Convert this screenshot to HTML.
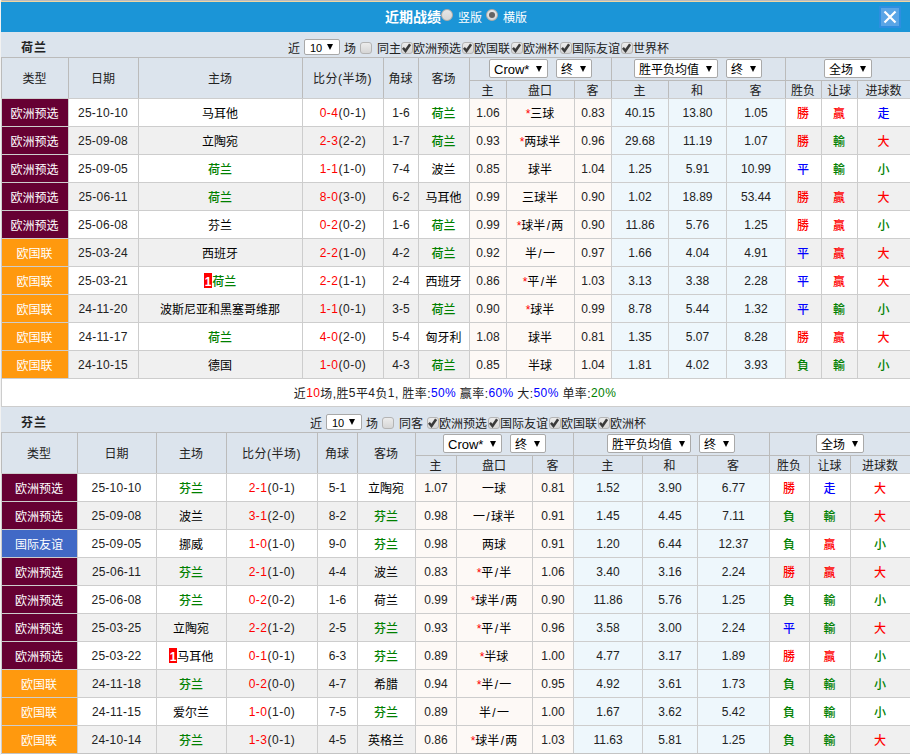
<!DOCTYPE html><html lang="zh-CN"><head><meta charset="utf-8"><title>近期战绩</title><style>
*{box-sizing:border-box;margin:0;padding:0}
html,body{width:910px;height:755px;overflow:hidden;background:#fff}
body{font-family:"Liberation Sans","Noto Sans CJK SC",sans-serif;font-size:12px;color:#222;position:relative}
#wrap{position:absolute;left:0;top:0;width:910px;height:755px;overflow:hidden;background:#fff}
#edge{position:absolute;left:0;top:0;width:1px;height:755px;background:#f2f2f2;z-index:5}
#l0{position:absolute;left:2px;top:0;width:908px;height:1px;background:#b9bbc1}
#l1{position:absolute;left:1px;top:0;width:909px;height:2px;background:#f0d6a2}
#bar{position:absolute;left:1px;top:2px;width:909px;height:30px;background:#1b95d7;color:#fff}
#title{position:absolute;left:385px;top:5px;font-size:14px;font-weight:bold;line-height:20px;white-space:nowrap;letter-spacing:0}
.rtxt{position:absolute;top:7px;line-height:18px;white-space:nowrap;font-size:12px}
.radio{position:absolute;width:12px;height:12px;border-radius:50%;border:1px solid #b3ada6;background:linear-gradient(#e6e6e6,#d6d6d6);top:7px}
.radio.on:after{content:"";position:absolute;left:2px;top:2px;width:6px;height:6px;border-radius:50%;background:#636363}
#close{position:absolute;left:879px;top:6px;width:22px;height:22px;background:#5aa5e6;border:2px solid #2d8fe0}
#close svg{position:absolute;left:0;top:0}
.sec{position:absolute;left:1px;width:909px;height:26px;background:#dce4ed}
.sec b{position:absolute;left:20px;top:8px;line-height:16px;font-size:12px;color:#222;letter-spacing:1px}
.tb{position:absolute;top:0;height:26px;white-space:nowrap}
.tb span,.tb i{position:absolute}
.tb .t{top:10px;line-height:14px}
.cb{width:12px;height:12px;top:10px;border:1px solid #b4b4b4;border-radius:3px;background:linear-gradient(#ececec,#d6d6d6)}
.cb svg{position:absolute;left:0;top:0}
.sel{position:absolute;background:#fff;border:1px solid #a9a9a9;border-radius:2px;height:19px;line-height:17px;padding-top:2px;overflow:hidden;padding-left:4px;font-size:12px;color:#000;white-space:nowrap;text-align:left}
.sel i{position:absolute;right:5.5px;top:6px;width:0;height:0;border-left:3.5px solid transparent;border-right:3.5px solid transparent;border-top:6px solid #000}
.sel.s{height:16px;line-height:14px;padding-top:1px;font-size:11px;padding-left:5px}
.sel.s i{top:4px;right:6px;border-top-width:6px;border-left-width:3.5px;border-right-width:3.5px}
.lat{font-size:13px;position:relative;top:-1px}
.grid{position:absolute;left:0;width:911px}
.c{position:absolute;text-align:center;border-left:1px solid #cdcdcd;border-top:1px solid #cdcdcd;white-space:nowrap;overflow:hidden;line-height:27px;height:28px}
.h{background:#dce4ed;border-color:#bbb;color:#222;padding-right:1px}
.h1{height:41px;line-height:40px;padding-top:1px}
.h2{height:23px}
.h3{height:18px;line-height:17px;padding-top:2px}
.d{letter-spacing:.25px;padding-right:1px}.sc{letter-spacing:.5px}.z{padding-top:2px;padding-right:1px}.n{padding-top:1px}
.w{background:#fff}.g{background:#f0f0f0}
.oa{background:#fdf9f6}.ob{background:#eef7fc}
.t1{background:#660033;color:#fff}.t2{background:#ff990e;color:#fff}.t3{background:#4169c6;color:#fff}
.gr{color:#008000;font-weight:500}.rd{color:#f00;font-weight:500}.bl{color:#00f;font-weight:500}
.k{color:#000}
.sl{padding:0 1.3px}
.rc{background:#f00;color:#fff;font-weight:bold;display:inline-block;line-height:18px;height:15px;overflow:hidden;padding:0 1px;vertical-align:middle;position:relative;top:-2px}
.sum{position:absolute;left:1px;width:910px;height:29px;border:1px solid #cdcdcd;border-top:1px solid #cdcdcd;background:#fff;text-align:center;line-height:27px;color:#222;padding-top:2px;padding-right:2px;letter-spacing:0.4px}
.sum span{position:relative;top:-1px}
.bot{position:absolute;left:1px;width:910px;height:1px;background:#c4c4c4}
</style></head><body><div id="wrap">
<div id="l1"></div><div id="l0"></div>
<div id="bar"><span id="title" style="left:384px">近期战绩</span><span class="radio" style="left:440px"></span><span class="rtxt" style="left:457px">竖版</span><span class="radio on" style="left:485px"></span><span class="rtxt" style="left:502px">横版</span><div id="close" style="left:878px;top:4px"><svg width="18" height="18" viewBox="0 0 18 18"><path d="M3.5 3.5 L14.5 14.5 M14.5 3.5 L3.5 14.5" stroke="#fff" stroke-width="2.2" fill="none"/></svg></div></div>
<div class="sec" style="top:32px"><b>荷兰</b><div class="tb" style="left:-1px"><span class="t" style="left:288px">近</span><span class="sel s" style="left:304px;top:7px;width:36px">10<i></i></span><span class="t" style="left:344px">场</span><span class="cb" style="left:360px"></span><span class="t" style="left:377px">同主</span><span class="cb" style="left:401px"><svg width="10" height="10" viewBox="0 0 10 10"><path d="M0.9 4.9 L3.5 7.9 L8.1 1.3" fill="none" stroke="#3a3a3a" stroke-width="2.6"/></svg></span><span class="t" style="left:413px">欧洲预选</span><span class="cb" style="left:462px"><svg width="10" height="10" viewBox="0 0 10 10"><path d="M0.9 4.9 L3.5 7.9 L8.1 1.3" fill="none" stroke="#3a3a3a" stroke-width="2.6"/></svg></span><span class="t" style="left:474px">欧国联</span><span class="cb" style="left:511px"><svg width="10" height="10" viewBox="0 0 10 10"><path d="M0.9 4.9 L3.5 7.9 L8.1 1.3" fill="none" stroke="#3a3a3a" stroke-width="2.6"/></svg></span><span class="t" style="left:523px">欧洲杯</span><span class="cb" style="left:560px"><svg width="10" height="10" viewBox="0 0 10 10"><path d="M0.9 4.9 L3.5 7.9 L8.1 1.3" fill="none" stroke="#3a3a3a" stroke-width="2.6"/></svg></span><span class="t" style="left:572px">国际友谊</span><span class="cb" style="left:621px"><svg width="10" height="10" viewBox="0 0 10 10"><path d="M0.9 4.9 L3.5 7.9 L8.1 1.3" fill="none" stroke="#3a3a3a" stroke-width="2.6"/></svg></span><span class="t" style="left:633px">世界杯</span></div></div>
<div class="grid" style="top:0"><div class="c h h1" style="left:1px;top:57px;width:67px">类型</div>
<div class="c h h1" style="left:68px;top:57px;width:70px">日期</div>
<div class="c h h1" style="left:138px;top:57px;width:164px">主场</div>
<div class="c h h1 sc" style="left:302px;top:57px;width:81px">比分(半场)</div>
<div class="c h h1" style="left:383px;top:57px;width:35px">角球</div>
<div class="c h h1" style="left:418px;top:57px;width:51px">客场</div>
<div class="c h h2" style="left:469px;top:57px;width:142px"></div>
<div class="c h h2" style="left:611px;top:57px;width:174px"></div>
<div class="c h h2" style="left:785px;top:57px;width:125px"></div>
<div class="c h h3" style="left:469px;top:80px;width:37px">主</div>
<div class="c h h3" style="left:506px;top:80px;width:68px">盘口</div>
<div class="c h h3" style="left:574px;top:80px;width:37px">客</div>
<div class="c h h3" style="left:611px;top:80px;width:57px">主</div>
<div class="c h h3" style="left:668px;top:80px;width:58px">和</div>
<div class="c h h3" style="left:726px;top:80px;width:59px">客</div>
<div class="c h h3" style="left:785px;top:80px;width:36px">胜负</div>
<div class="c h h3" style="left:821px;top:80px;width:36px">让球</div>
<div class="c h h3" style="left:857px;top:80px;width:53px">进球数</div>
<span class="sel" style="left:489px;top:59px;width:59px"><span class="lat">Crow*</span><i></i></span>
<span class="sel" style="left:556px;top:59px;width:36px">终<i></i></span>
<span class="sel" style="left:634px;top:59px;width:84px">胜平负均值<i></i></span>
<span class="sel" style="left:726px;top:59px;width:36px">终<i></i></span>
<span class="sel" style="left:824px;top:59px;width:48px">全场<i></i></span>
<div class="c t1 z" style="left:1px;top:98px;width:67px">欧洲预选</div>
<div class="c w n d" style="left:68px;top:98px;width:70px">25-10-10</div>
<div class="c w z" style="left:138px;top:98px;width:164px"><span class="k">马耳他</span></div>
<div class="c w n sc" style="left:302px;top:98px;width:81px"><span class="rd">0-4</span>(0-1)</div>
<div class="c w n" style="left:383px;top:98px;width:35px">1-6</div>
<div class="c w z" style="left:418px;top:98px;width:51px"><span class="gr">荷兰</span></div>
<div class="c oa n" style="left:469px;top:98px;width:37px">1.06</div>
<div class="c oa k z" style="left:506px;top:98px;width:68px"><span class="rd">*</span>三球</div>
<div class="c oa n" style="left:574px;top:98px;width:37px">0.83</div>
<div class="c ob n" style="left:611px;top:98px;width:57px">40.15</div>
<div class="c ob n" style="left:668px;top:98px;width:58px">13.80</div>
<div class="c ob n" style="left:726px;top:98px;width:59px">1.05</div>
<div class="c w z rd" style="left:785px;top:98px;width:36px">勝</div>
<div class="c w z rd" style="left:821px;top:98px;width:36px">贏</div>
<div class="c w z bl" style="left:857px;top:98px;width:53px">走</div>
<div class="c t1 z" style="left:1px;top:126px;width:67px">欧洲预选</div>
<div class="c g n d" style="left:68px;top:126px;width:70px">25-09-08</div>
<div class="c g z" style="left:138px;top:126px;width:164px"><span class="k">立陶宛</span></div>
<div class="c g n sc" style="left:302px;top:126px;width:81px"><span class="rd">2-3</span>(2-2)</div>
<div class="c g n" style="left:383px;top:126px;width:35px">1-7</div>
<div class="c g z" style="left:418px;top:126px;width:51px"><span class="gr">荷兰</span></div>
<div class="c oa n" style="left:469px;top:126px;width:37px">0.93</div>
<div class="c oa k z" style="left:506px;top:126px;width:68px"><span class="rd">*</span>两球半</div>
<div class="c oa n" style="left:574px;top:126px;width:37px">0.96</div>
<div class="c ob n" style="left:611px;top:126px;width:57px">29.68</div>
<div class="c ob n" style="left:668px;top:126px;width:58px">11.19</div>
<div class="c ob n" style="left:726px;top:126px;width:59px">1.07</div>
<div class="c g z rd" style="left:785px;top:126px;width:36px">勝</div>
<div class="c g z gr" style="left:821px;top:126px;width:36px">輸</div>
<div class="c g z rd" style="left:857px;top:126px;width:53px">大</div>
<div class="c t1 z" style="left:1px;top:154px;width:67px">欧洲预选</div>
<div class="c w n d" style="left:68px;top:154px;width:70px">25-09-05</div>
<div class="c w z" style="left:138px;top:154px;width:164px"><span class="gr">荷兰</span></div>
<div class="c w n sc" style="left:302px;top:154px;width:81px"><span class="rd">1-1</span>(1-0)</div>
<div class="c w n" style="left:383px;top:154px;width:35px">7-4</div>
<div class="c w z" style="left:418px;top:154px;width:51px"><span class="k">波兰</span></div>
<div class="c oa n" style="left:469px;top:154px;width:37px">0.85</div>
<div class="c oa k z" style="left:506px;top:154px;width:68px">球半</div>
<div class="c oa n" style="left:574px;top:154px;width:37px">1.04</div>
<div class="c ob n" style="left:611px;top:154px;width:57px">1.25</div>
<div class="c ob n" style="left:668px;top:154px;width:58px">5.91</div>
<div class="c ob n" style="left:726px;top:154px;width:59px">10.99</div>
<div class="c w z bl" style="left:785px;top:154px;width:36px">平</div>
<div class="c w z gr" style="left:821px;top:154px;width:36px">輸</div>
<div class="c w z gr" style="left:857px;top:154px;width:53px">小</div>
<div class="c t1 z" style="left:1px;top:182px;width:67px">欧洲预选</div>
<div class="c g n d" style="left:68px;top:182px;width:70px">25-06-11</div>
<div class="c g z" style="left:138px;top:182px;width:164px"><span class="gr">荷兰</span></div>
<div class="c g n sc" style="left:302px;top:182px;width:81px"><span class="rd">8-0</span>(3-0)</div>
<div class="c g n" style="left:383px;top:182px;width:35px">6-2</div>
<div class="c g z" style="left:418px;top:182px;width:51px"><span class="k">马耳他</span></div>
<div class="c oa n" style="left:469px;top:182px;width:37px">0.99</div>
<div class="c oa k z" style="left:506px;top:182px;width:68px">三球半</div>
<div class="c oa n" style="left:574px;top:182px;width:37px">0.90</div>
<div class="c ob n" style="left:611px;top:182px;width:57px">1.02</div>
<div class="c ob n" style="left:668px;top:182px;width:58px">18.89</div>
<div class="c ob n" style="left:726px;top:182px;width:59px">53.44</div>
<div class="c g z rd" style="left:785px;top:182px;width:36px">勝</div>
<div class="c g z rd" style="left:821px;top:182px;width:36px">贏</div>
<div class="c g z rd" style="left:857px;top:182px;width:53px">大</div>
<div class="c t1 z" style="left:1px;top:210px;width:67px">欧洲预选</div>
<div class="c w n d" style="left:68px;top:210px;width:70px">25-06-08</div>
<div class="c w z" style="left:138px;top:210px;width:164px"><span class="k">芬兰</span></div>
<div class="c w n sc" style="left:302px;top:210px;width:81px"><span class="rd">0-2</span>(0-2)</div>
<div class="c w n" style="left:383px;top:210px;width:35px">1-6</div>
<div class="c w z" style="left:418px;top:210px;width:51px"><span class="gr">荷兰</span></div>
<div class="c oa n" style="left:469px;top:210px;width:37px">0.99</div>
<div class="c oa k z" style="left:506px;top:210px;width:68px"><span class="rd">*</span>球半<span class="sl">/</span>两</div>
<div class="c oa n" style="left:574px;top:210px;width:37px">0.90</div>
<div class="c ob n" style="left:611px;top:210px;width:57px">11.86</div>
<div class="c ob n" style="left:668px;top:210px;width:58px">5.76</div>
<div class="c ob n" style="left:726px;top:210px;width:59px">1.25</div>
<div class="c w z rd" style="left:785px;top:210px;width:36px">勝</div>
<div class="c w z rd" style="left:821px;top:210px;width:36px">贏</div>
<div class="c w z gr" style="left:857px;top:210px;width:53px">小</div>
<div class="c t2 z" style="left:1px;top:238px;width:67px">欧国联</div>
<div class="c g n d" style="left:68px;top:238px;width:70px">25-03-24</div>
<div class="c g z" style="left:138px;top:238px;width:164px"><span class="k">西班牙</span></div>
<div class="c g n sc" style="left:302px;top:238px;width:81px"><span class="rd">2-2</span>(1-0)</div>
<div class="c g n" style="left:383px;top:238px;width:35px">4-2</div>
<div class="c g z" style="left:418px;top:238px;width:51px"><span class="gr">荷兰</span></div>
<div class="c oa n" style="left:469px;top:238px;width:37px">0.92</div>
<div class="c oa k z" style="left:506px;top:238px;width:68px">半<span class="sl">/</span>一</div>
<div class="c oa n" style="left:574px;top:238px;width:37px">0.97</div>
<div class="c ob n" style="left:611px;top:238px;width:57px">1.66</div>
<div class="c ob n" style="left:668px;top:238px;width:58px">4.04</div>
<div class="c ob n" style="left:726px;top:238px;width:59px">4.91</div>
<div class="c g z bl" style="left:785px;top:238px;width:36px">平</div>
<div class="c g z rd" style="left:821px;top:238px;width:36px">贏</div>
<div class="c g z rd" style="left:857px;top:238px;width:53px">大</div>
<div class="c t2 z" style="left:1px;top:266px;width:67px">欧国联</div>
<div class="c w n d" style="left:68px;top:266px;width:70px">25-03-21</div>
<div class="c w z" style="left:138px;top:266px;width:164px"><span class="rc">1</span><span class="gr">荷兰</span></div>
<div class="c w n sc" style="left:302px;top:266px;width:81px"><span class="rd">2-2</span>(1-1)</div>
<div class="c w n" style="left:383px;top:266px;width:35px">2-4</div>
<div class="c w z" style="left:418px;top:266px;width:51px"><span class="k">西班牙</span></div>
<div class="c oa n" style="left:469px;top:266px;width:37px">0.86</div>
<div class="c oa k z" style="left:506px;top:266px;width:68px"><span class="rd">*</span>平<span class="sl">/</span>半</div>
<div class="c oa n" style="left:574px;top:266px;width:37px">1.03</div>
<div class="c ob n" style="left:611px;top:266px;width:57px">3.13</div>
<div class="c ob n" style="left:668px;top:266px;width:58px">3.38</div>
<div class="c ob n" style="left:726px;top:266px;width:59px">2.28</div>
<div class="c w z bl" style="left:785px;top:266px;width:36px">平</div>
<div class="c w z rd" style="left:821px;top:266px;width:36px">贏</div>
<div class="c w z rd" style="left:857px;top:266px;width:53px">大</div>
<div class="c t2 z" style="left:1px;top:294px;width:67px">欧国联</div>
<div class="c g n d" style="left:68px;top:294px;width:70px">24-11-20</div>
<div class="c g z" style="left:138px;top:294px;width:164px"><span class="k">波斯尼亚和黑塞哥维那</span></div>
<div class="c g n sc" style="left:302px;top:294px;width:81px"><span class="rd">1-1</span>(0-1)</div>
<div class="c g n" style="left:383px;top:294px;width:35px">3-5</div>
<div class="c g z" style="left:418px;top:294px;width:51px"><span class="gr">荷兰</span></div>
<div class="c oa n" style="left:469px;top:294px;width:37px">0.90</div>
<div class="c oa k z" style="left:506px;top:294px;width:68px"><span class="rd">*</span>球半</div>
<div class="c oa n" style="left:574px;top:294px;width:37px">0.99</div>
<div class="c ob n" style="left:611px;top:294px;width:57px">8.78</div>
<div class="c ob n" style="left:668px;top:294px;width:58px">5.44</div>
<div class="c ob n" style="left:726px;top:294px;width:59px">1.32</div>
<div class="c g z bl" style="left:785px;top:294px;width:36px">平</div>
<div class="c g z gr" style="left:821px;top:294px;width:36px">輸</div>
<div class="c g z gr" style="left:857px;top:294px;width:53px">小</div>
<div class="c t2 z" style="left:1px;top:322px;width:67px">欧国联</div>
<div class="c w n d" style="left:68px;top:322px;width:70px">24-11-17</div>
<div class="c w z" style="left:138px;top:322px;width:164px"><span class="gr">荷兰</span></div>
<div class="c w n sc" style="left:302px;top:322px;width:81px"><span class="rd">4-0</span>(2-0)</div>
<div class="c w n" style="left:383px;top:322px;width:35px">5-4</div>
<div class="c w z" style="left:418px;top:322px;width:51px"><span class="k">匈牙利</span></div>
<div class="c oa n" style="left:469px;top:322px;width:37px">1.08</div>
<div class="c oa k z" style="left:506px;top:322px;width:68px">球半</div>
<div class="c oa n" style="left:574px;top:322px;width:37px">0.81</div>
<div class="c ob n" style="left:611px;top:322px;width:57px">1.35</div>
<div class="c ob n" style="left:668px;top:322px;width:58px">5.07</div>
<div class="c ob n" style="left:726px;top:322px;width:59px">8.28</div>
<div class="c w z rd" style="left:785px;top:322px;width:36px">勝</div>
<div class="c w z rd" style="left:821px;top:322px;width:36px">贏</div>
<div class="c w z rd" style="left:857px;top:322px;width:53px">大</div>
<div class="c t2 z" style="left:1px;top:350px;width:67px">欧国联</div>
<div class="c g n d" style="left:68px;top:350px;width:70px">24-10-15</div>
<div class="c g z" style="left:138px;top:350px;width:164px"><span class="k">德国</span></div>
<div class="c g n sc" style="left:302px;top:350px;width:81px"><span class="rd">1-0</span>(0-0)</div>
<div class="c g n" style="left:383px;top:350px;width:35px">4-3</div>
<div class="c g z" style="left:418px;top:350px;width:51px"><span class="gr">荷兰</span></div>
<div class="c oa n" style="left:469px;top:350px;width:37px">0.85</div>
<div class="c oa k z" style="left:506px;top:350px;width:68px">半球</div>
<div class="c oa n" style="left:574px;top:350px;width:37px">1.04</div>
<div class="c ob n" style="left:611px;top:350px;width:57px">1.81</div>
<div class="c ob n" style="left:668px;top:350px;width:58px">4.02</div>
<div class="c ob n" style="left:726px;top:350px;width:59px">3.93</div>
<div class="c g z gr" style="left:785px;top:350px;width:36px">負</div>
<div class="c g z gr" style="left:821px;top:350px;width:36px">輸</div>
<div class="c g z gr" style="left:857px;top:350px;width:53px">小</div></div>
<div class="sum" style="top:378px">近<span class="rd">10</span>场,胜<span>5</span>平<span>4</span>负<span>1</span>, 胜率:<span class="bl">50%</span> 赢率:<span class="bl">60%</span> 大:<span class="bl">50%</span> 单率:<span class="gr">20%</span></div>
<div class="sec" style="top:407px;height:25px"><b>芬兰</b><div class="tb" style="left:-1px"><span class="t" style="left:310px">近</span><span class="sel s" style="left:326px;top:7px;width:36px">10<i></i></span><span class="t" style="left:366px">场</span><span class="cb" style="left:382px"></span><span class="t" style="left:399px">同客</span><span class="cb" style="left:427px"><svg width="10" height="10" viewBox="0 0 10 10"><path d="M0.9 4.9 L3.5 7.9 L8.1 1.3" fill="none" stroke="#3a3a3a" stroke-width="2.6"/></svg></span><span class="t" style="left:439px">欧洲预选</span><span class="cb" style="left:488px"><svg width="10" height="10" viewBox="0 0 10 10"><path d="M0.9 4.9 L3.5 7.9 L8.1 1.3" fill="none" stroke="#3a3a3a" stroke-width="2.6"/></svg></span><span class="t" style="left:500px">国际友谊</span><span class="cb" style="left:549px"><svg width="10" height="10" viewBox="0 0 10 10"><path d="M0.9 4.9 L3.5 7.9 L8.1 1.3" fill="none" stroke="#3a3a3a" stroke-width="2.6"/></svg></span><span class="t" style="left:561px">欧国联</span><span class="cb" style="left:598px"><svg width="10" height="10" viewBox="0 0 10 10"><path d="M0.9 4.9 L3.5 7.9 L8.1 1.3" fill="none" stroke="#3a3a3a" stroke-width="2.6"/></svg></span><span class="t" style="left:610px">欧洲杯</span></div></div>
<div class="grid" style="top:0"><div class="c h h1" style="left:1px;top:432px;width:76px">类型</div>
<div class="c h h1" style="left:77px;top:432px;width:79px">日期</div>
<div class="c h h1" style="left:156px;top:432px;width:70px">主场</div>
<div class="c h h1 sc" style="left:226px;top:432px;width:91px">比分(半场)</div>
<div class="c h h1" style="left:317px;top:432px;width:40px">角球</div>
<div class="c h h1" style="left:357px;top:432px;width:58px">客场</div>
<div class="c h h2" style="left:415px;top:432px;width:158px"></div>
<div class="c h h2" style="left:573px;top:432px;width:196px"></div>
<div class="c h h2" style="left:769px;top:432px;width:141px"></div>
<div class="c h h3" style="left:415px;top:455px;width:41px">主</div>
<div class="c h h3" style="left:456px;top:455px;width:76px">盘口</div>
<div class="c h h3" style="left:532px;top:455px;width:41px">客</div>
<div class="c h h3" style="left:573px;top:455px;width:69px">主</div>
<div class="c h h3" style="left:642px;top:455px;width:55px">和</div>
<div class="c h h3" style="left:697px;top:455px;width:72px">客</div>
<div class="c h h3" style="left:769px;top:455px;width:40px">胜负</div>
<div class="c h h3" style="left:809px;top:455px;width:41px">让球</div>
<div class="c h h3" style="left:850px;top:455px;width:60px">进球数</div>
<span class="sel" style="left:443px;top:434px;width:59px"><span class="lat">Crow*</span><i></i></span>
<span class="sel" style="left:510px;top:434px;width:36px">终<i></i></span>
<span class="sel" style="left:607px;top:434px;width:84px">胜平负均值<i></i></span>
<span class="sel" style="left:699px;top:434px;width:36px">终<i></i></span>
<span class="sel" style="left:816px;top:434px;width:48px">全场<i></i></span>
<div class="c t1 z" style="left:1px;top:473px;width:76px">欧洲预选</div>
<div class="c w n d" style="left:77px;top:473px;width:79px">25-10-10</div>
<div class="c w z" style="left:156px;top:473px;width:70px"><span class="gr">芬兰</span></div>
<div class="c w n sc" style="left:226px;top:473px;width:91px"><span class="rd">2-1</span>(0-1)</div>
<div class="c w n" style="left:317px;top:473px;width:40px">5-1</div>
<div class="c w z" style="left:357px;top:473px;width:58px"><span class="k">立陶宛</span></div>
<div class="c oa n" style="left:415px;top:473px;width:41px">1.07</div>
<div class="c oa k z" style="left:456px;top:473px;width:76px">一球</div>
<div class="c oa n" style="left:532px;top:473px;width:41px">0.81</div>
<div class="c ob n" style="left:573px;top:473px;width:69px">1.52</div>
<div class="c ob n" style="left:642px;top:473px;width:55px">3.90</div>
<div class="c ob n" style="left:697px;top:473px;width:72px">6.77</div>
<div class="c w z rd" style="left:769px;top:473px;width:40px">勝</div>
<div class="c w z bl" style="left:809px;top:473px;width:41px">走</div>
<div class="c w z rd" style="left:850px;top:473px;width:60px">大</div>
<div class="c t1 z" style="left:1px;top:501px;width:76px">欧洲预选</div>
<div class="c g n d" style="left:77px;top:501px;width:79px">25-09-08</div>
<div class="c g z" style="left:156px;top:501px;width:70px"><span class="k">波兰</span></div>
<div class="c g n sc" style="left:226px;top:501px;width:91px"><span class="rd">3-1</span>(2-0)</div>
<div class="c g n" style="left:317px;top:501px;width:40px">8-2</div>
<div class="c g z" style="left:357px;top:501px;width:58px"><span class="gr">芬兰</span></div>
<div class="c oa n" style="left:415px;top:501px;width:41px">0.98</div>
<div class="c oa k z" style="left:456px;top:501px;width:76px">一<span class="sl">/</span>球半</div>
<div class="c oa n" style="left:532px;top:501px;width:41px">0.91</div>
<div class="c ob n" style="left:573px;top:501px;width:69px">1.45</div>
<div class="c ob n" style="left:642px;top:501px;width:55px">4.45</div>
<div class="c ob n" style="left:697px;top:501px;width:72px">7.11</div>
<div class="c g z gr" style="left:769px;top:501px;width:40px">負</div>
<div class="c g z gr" style="left:809px;top:501px;width:41px">輸</div>
<div class="c g z rd" style="left:850px;top:501px;width:60px">大</div>
<div class="c t3 z" style="left:1px;top:529px;width:76px">国际友谊</div>
<div class="c w n d" style="left:77px;top:529px;width:79px">25-09-05</div>
<div class="c w z" style="left:156px;top:529px;width:70px"><span class="k">挪威</span></div>
<div class="c w n sc" style="left:226px;top:529px;width:91px"><span class="rd">1-0</span>(1-0)</div>
<div class="c w n" style="left:317px;top:529px;width:40px">9-0</div>
<div class="c w z" style="left:357px;top:529px;width:58px"><span class="gr">芬兰</span></div>
<div class="c oa n" style="left:415px;top:529px;width:41px">0.98</div>
<div class="c oa k z" style="left:456px;top:529px;width:76px">两球</div>
<div class="c oa n" style="left:532px;top:529px;width:41px">0.91</div>
<div class="c ob n" style="left:573px;top:529px;width:69px">1.20</div>
<div class="c ob n" style="left:642px;top:529px;width:55px">6.44</div>
<div class="c ob n" style="left:697px;top:529px;width:72px">12.37</div>
<div class="c w z gr" style="left:769px;top:529px;width:40px">負</div>
<div class="c w z rd" style="left:809px;top:529px;width:41px">贏</div>
<div class="c w z gr" style="left:850px;top:529px;width:60px">小</div>
<div class="c t1 z" style="left:1px;top:557px;width:76px">欧洲预选</div>
<div class="c g n d" style="left:77px;top:557px;width:79px">25-06-11</div>
<div class="c g z" style="left:156px;top:557px;width:70px"><span class="gr">芬兰</span></div>
<div class="c g n sc" style="left:226px;top:557px;width:91px"><span class="rd">2-1</span>(1-0)</div>
<div class="c g n" style="left:317px;top:557px;width:40px">4-4</div>
<div class="c g z" style="left:357px;top:557px;width:58px"><span class="k">波兰</span></div>
<div class="c oa n" style="left:415px;top:557px;width:41px">0.83</div>
<div class="c oa k z" style="left:456px;top:557px;width:76px"><span class="rd">*</span>平<span class="sl">/</span>半</div>
<div class="c oa n" style="left:532px;top:557px;width:41px">1.06</div>
<div class="c ob n" style="left:573px;top:557px;width:69px">3.40</div>
<div class="c ob n" style="left:642px;top:557px;width:55px">3.16</div>
<div class="c ob n" style="left:697px;top:557px;width:72px">2.24</div>
<div class="c g z rd" style="left:769px;top:557px;width:40px">勝</div>
<div class="c g z rd" style="left:809px;top:557px;width:41px">贏</div>
<div class="c g z rd" style="left:850px;top:557px;width:60px">大</div>
<div class="c t1 z" style="left:1px;top:585px;width:76px">欧洲预选</div>
<div class="c w n d" style="left:77px;top:585px;width:79px">25-06-08</div>
<div class="c w z" style="left:156px;top:585px;width:70px"><span class="gr">芬兰</span></div>
<div class="c w n sc" style="left:226px;top:585px;width:91px"><span class="rd">0-2</span>(0-2)</div>
<div class="c w n" style="left:317px;top:585px;width:40px">1-6</div>
<div class="c w z" style="left:357px;top:585px;width:58px"><span class="k">荷兰</span></div>
<div class="c oa n" style="left:415px;top:585px;width:41px">0.99</div>
<div class="c oa k z" style="left:456px;top:585px;width:76px"><span class="rd">*</span>球半<span class="sl">/</span>两</div>
<div class="c oa n" style="left:532px;top:585px;width:41px">0.90</div>
<div class="c ob n" style="left:573px;top:585px;width:69px">11.86</div>
<div class="c ob n" style="left:642px;top:585px;width:55px">5.76</div>
<div class="c ob n" style="left:697px;top:585px;width:72px">1.25</div>
<div class="c w z gr" style="left:769px;top:585px;width:40px">負</div>
<div class="c w z gr" style="left:809px;top:585px;width:41px">輸</div>
<div class="c w z gr" style="left:850px;top:585px;width:60px">小</div>
<div class="c t1 z" style="left:1px;top:613px;width:76px">欧洲预选</div>
<div class="c g n d" style="left:77px;top:613px;width:79px">25-03-25</div>
<div class="c g z" style="left:156px;top:613px;width:70px"><span class="k">立陶宛</span></div>
<div class="c g n sc" style="left:226px;top:613px;width:91px"><span class="rd">2-2</span>(1-2)</div>
<div class="c g n" style="left:317px;top:613px;width:40px">2-5</div>
<div class="c g z" style="left:357px;top:613px;width:58px"><span class="gr">芬兰</span></div>
<div class="c oa n" style="left:415px;top:613px;width:41px">0.93</div>
<div class="c oa k z" style="left:456px;top:613px;width:76px"><span class="rd">*</span>平<span class="sl">/</span>半</div>
<div class="c oa n" style="left:532px;top:613px;width:41px">0.96</div>
<div class="c ob n" style="left:573px;top:613px;width:69px">3.58</div>
<div class="c ob n" style="left:642px;top:613px;width:55px">3.00</div>
<div class="c ob n" style="left:697px;top:613px;width:72px">2.24</div>
<div class="c g z bl" style="left:769px;top:613px;width:40px">平</div>
<div class="c g z gr" style="left:809px;top:613px;width:41px">輸</div>
<div class="c g z rd" style="left:850px;top:613px;width:60px">大</div>
<div class="c t1 z" style="left:1px;top:641px;width:76px">欧洲预选</div>
<div class="c w n d" style="left:77px;top:641px;width:79px">25-03-22</div>
<div class="c w z" style="left:156px;top:641px;width:70px"><span class="rc">1</span><span class="k">马耳他</span></div>
<div class="c w n sc" style="left:226px;top:641px;width:91px"><span class="rd">0-1</span>(0-1)</div>
<div class="c w n" style="left:317px;top:641px;width:40px">6-3</div>
<div class="c w z" style="left:357px;top:641px;width:58px"><span class="gr">芬兰</span></div>
<div class="c oa n" style="left:415px;top:641px;width:41px">0.89</div>
<div class="c oa k z" style="left:456px;top:641px;width:76px"><span class="rd">*</span>半球</div>
<div class="c oa n" style="left:532px;top:641px;width:41px">1.00</div>
<div class="c ob n" style="left:573px;top:641px;width:69px">4.77</div>
<div class="c ob n" style="left:642px;top:641px;width:55px">3.17</div>
<div class="c ob n" style="left:697px;top:641px;width:72px">1.89</div>
<div class="c w z rd" style="left:769px;top:641px;width:40px">勝</div>
<div class="c w z rd" style="left:809px;top:641px;width:41px">贏</div>
<div class="c w z gr" style="left:850px;top:641px;width:60px">小</div>
<div class="c t2 z" style="left:1px;top:669px;width:76px">欧国联</div>
<div class="c g n d" style="left:77px;top:669px;width:79px">24-11-18</div>
<div class="c g z" style="left:156px;top:669px;width:70px"><span class="gr">芬兰</span></div>
<div class="c g n sc" style="left:226px;top:669px;width:91px"><span class="rd">0-2</span>(0-0)</div>
<div class="c g n" style="left:317px;top:669px;width:40px">4-7</div>
<div class="c g z" style="left:357px;top:669px;width:58px"><span class="k">希腊</span></div>
<div class="c oa n" style="left:415px;top:669px;width:41px">0.94</div>
<div class="c oa k z" style="left:456px;top:669px;width:76px"><span class="rd">*</span>半<span class="sl">/</span>一</div>
<div class="c oa n" style="left:532px;top:669px;width:41px">0.95</div>
<div class="c ob n" style="left:573px;top:669px;width:69px">4.92</div>
<div class="c ob n" style="left:642px;top:669px;width:55px">3.61</div>
<div class="c ob n" style="left:697px;top:669px;width:72px">1.73</div>
<div class="c g z gr" style="left:769px;top:669px;width:40px">負</div>
<div class="c g z gr" style="left:809px;top:669px;width:41px">輸</div>
<div class="c g z gr" style="left:850px;top:669px;width:60px">小</div>
<div class="c t2 z" style="left:1px;top:697px;width:76px">欧国联</div>
<div class="c w n d" style="left:77px;top:697px;width:79px">24-11-15</div>
<div class="c w z" style="left:156px;top:697px;width:70px"><span class="k">爱尔兰</span></div>
<div class="c w n sc" style="left:226px;top:697px;width:91px"><span class="rd">1-0</span>(1-0)</div>
<div class="c w n" style="left:317px;top:697px;width:40px">7-5</div>
<div class="c w z" style="left:357px;top:697px;width:58px"><span class="gr">芬兰</span></div>
<div class="c oa n" style="left:415px;top:697px;width:41px">0.89</div>
<div class="c oa k z" style="left:456px;top:697px;width:76px">半<span class="sl">/</span>一</div>
<div class="c oa n" style="left:532px;top:697px;width:41px">1.00</div>
<div class="c ob n" style="left:573px;top:697px;width:69px">1.67</div>
<div class="c ob n" style="left:642px;top:697px;width:55px">3.62</div>
<div class="c ob n" style="left:697px;top:697px;width:72px">5.42</div>
<div class="c w z gr" style="left:769px;top:697px;width:40px">負</div>
<div class="c w z gr" style="left:809px;top:697px;width:41px">輸</div>
<div class="c w z gr" style="left:850px;top:697px;width:60px">小</div>
<div class="c t2 z" style="left:1px;top:725px;width:76px">欧国联</div>
<div class="c g n d" style="left:77px;top:725px;width:79px">24-10-14</div>
<div class="c g z" style="left:156px;top:725px;width:70px"><span class="gr">芬兰</span></div>
<div class="c g n sc" style="left:226px;top:725px;width:91px"><span class="rd">1-3</span>(0-1)</div>
<div class="c g n" style="left:317px;top:725px;width:40px">4-5</div>
<div class="c g z" style="left:357px;top:725px;width:58px"><span class="k">英格兰</span></div>
<div class="c oa n" style="left:415px;top:725px;width:41px">0.86</div>
<div class="c oa k z" style="left:456px;top:725px;width:76px"><span class="rd">*</span>球半<span class="sl">/</span>两</div>
<div class="c oa n" style="left:532px;top:725px;width:41px">1.03</div>
<div class="c ob n" style="left:573px;top:725px;width:69px">11.63</div>
<div class="c ob n" style="left:642px;top:725px;width:55px">5.81</div>
<div class="c ob n" style="left:697px;top:725px;width:72px">1.25</div>
<div class="c g z gr" style="left:769px;top:725px;width:40px">負</div>
<div class="c g z gr" style="left:809px;top:725px;width:41px">輸</div>
<div class="c g z rd" style="left:850px;top:725px;width:60px">大</div></div>
<div class="bot" style="top:753px"></div>
<div id="edge"></div>
</div></body></html>
